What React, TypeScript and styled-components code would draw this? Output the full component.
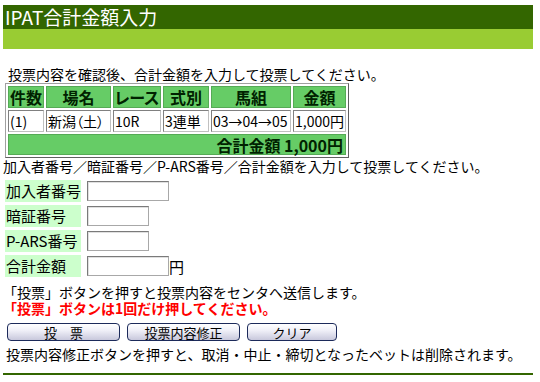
import styled, { createGlobalStyle } from "styled-components";

const GlobalStyle = createGlobalStyle`
  body {
    margin: 0;
    background: #ffffff;
    font-family: "Noto Sans CJK JP", "Liberation Sans", sans-serif;
    color: #000000;
  }
  * {
    box-sizing: border-box;
  }
`;

const Page = styled.div`
  width: 540px;
  height: 382px;
  padding: 5px 7px 0 3px;
  overflow: hidden;
`;

const TitleBar = styled.div`
  height: 24px;
  background: #336600;
  color: #ffffff;
  font-size: 19px;
  line-height: 24px;
  padding-left: 2px;
  white-space: nowrap;
`;

const SubBar = styled.div`
  height: 20px;
  background: #99cc33;
`;

const Line = styled.p<{ $indent?: number; $top?: number }>`
  margin: ${(p) => p.$top ?? 0}px 0 0 ${(p) => p.$indent ?? 0}px;
  font-size: 14px;
  line-height: 16px;
  white-space: nowrap;
`;

const Warning = styled.strong`
  color: #ff0000;
  font-weight: bold;
`;

const BetTable = styled.table`
  margin: 1px 0 0 2px;
  border: 1px solid #a0a0a0;
  border-right-color: #606060;
  border-bottom-color: #606060;
  border-spacing: 2px;
  table-layout: fixed;
  font-feature-settings: "palt";
`;

const HeadCell = styled.th<{ $w: number }>`
  width: ${(p) => p.$w}px;
  height: 22px;
  padding: 0;
  background: #66cc66;
  border: 1px solid #55aa55;
  color: #002200;
  font-size: 16px;
  font-weight: bold;
  text-align: center;
  line-height: 18px;
  white-space: nowrap;
`;

const DataCell = styled.td`
  height: 22px;
  padding: 0 1px;
  background: #ffffff;
  border: 1px solid #c0c0c0;
  border-top-color: #808080;
  border-left-color: #808080;
  font-size: 14px;
  line-height: 18px;
  white-space: nowrap;
`;

const TotalCell = styled.td`
  height: 21px;
  padding: 0 2px;
  background: #66cc66;
  border: 1px solid #55aa55;
  color: #002200;
  font-size: 16px;
  font-weight: bold;
  text-align: right;
  line-height: 18px;
`;

const FormGrid = styled.div`
  margin: 6px 0 0 2px;
  display: grid;
  grid-template-columns: 76px auto;
  column-gap: 6px;
  row-gap: 3px;
`;

const FieldLabel = styled.div`
  height: 22px;
  background: #ccffcc;
  font-size: 15px;
  line-height: 22px;
  padding-left: 1px;
  white-space: nowrap;
`;

const FieldBox = styled.div`
  display: flex;
  align-items: center;
  font-size: 15px;
`;

const TextInput = styled.input<{ $w: number }>`
  width: ${(p) => p.$w}px;
  height: 20px;
  margin: 0;
  padding: 0 2px;
  border: 1px solid #a8a8a8;
  border-top-color: #7a7a7a;
  border-left-color: #7a7a7a;
  box-shadow: inset 1px 1px 0 #e0e0e0;
  background: #ffffff;
`;

const ButtonRow = styled.div`
  display: flex;
  gap: 7px;
  margin: 7px 0 0 4px;
`;

const PushButton = styled.button<{ $w: number }>`
  width: ${(p) => p.$w}px;
  height: 18px;
  padding: 0;
  border: 1px solid #1c2a5a;
  border-radius: 4px;
  background: linear-gradient(#ffffff 0%, #f0f0f8 40%, #c8c8dc 100%);
  font-family: "Noto Sans CJK JP", sans-serif;
  font-size: 13px;
  line-height: 15px;
  color: #000000;
  white-space: nowrap;
`;

const FooterRule = styled.div`
  margin-top: 11px;
  height: 2px;
  background: #336600;
`;

const heads = [
  { label: "件数", w: 36 },
  { label: "場名", w: 65 },
  { label: "レース", w: 48 },
  { label: "式別", w: 46 },
  { label: "馬組", w: 80 },
  { label: "金額", w: 52 },
];

const row = ["(1)", "新潟（土）", "10R", "3連単", "03→04→05", "1,000円"];

const fields = [
  { label: "加入者番号", w: 82, unit: "" },
  { label: "暗証番号", w: 62, unit: "" },
  { label: "P-ARS番号", w: 62, unit: "" },
  { label: "合計金額", w: 82, unit: "円" },
];

export default function App() {
  return (
    <Page>
      <GlobalStyle />
      <TitleBar>IPAT合計金額入力</TitleBar>
      <SubBar />
      <Line $indent={5} $top={17}>
        投票内容を確認後、合計金額を入力して投票してください。
      </Line>
      <BetTable>
        <thead>
          <tr>
            {heads.map((h) => (
              <HeadCell key={h.label} $w={h.w}>
                {h.label}
              </HeadCell>
            ))}
          </tr>
        </thead>
        <tbody>
          <tr>
            {row.map((v, i) => (
              <DataCell key={i}>{v}</DataCell>
            ))}
          </tr>
          <tr>
            <TotalCell colSpan={6}>合計金額 1,000円</TotalCell>
          </tr>
        </tbody>
      </BetTable>
      <Line $top={0}>
        加入者番号／暗証番号／P-ARS番号／合計金額を入力して投票してください。
      </Line>
      <FormGrid>
        {fields.map((f) => [
          <FieldLabel key={f.label}>{f.label}</FieldLabel>,
          <FieldBox key={f.label + "-box"}>
            <TextInput type="text" $w={f.w} />
            {f.unit}
          </FieldBox>,
        ])}
      </FormGrid>
      <Line $top={7}>
        「投票」ボタンを押すと投票内容をセンタへ送信します。
        <br />
        <Warning>「投票」ボタンは1回だけ押してください。</Warning>
      </Line>
      <ButtonRow>
        <PushButton $w={113}>投　票</PushButton>
        <PushButton $w={113}>投票内容修正</PushButton>
        <PushButton $w={90}>クリア</PushButton>
      </ButtonRow>
      <Line $indent={3} $top={5}>
        投票内容修正ボタンを押すと、取消・中止・締切となったベットは削除されます。
      </Line>
      <FooterRule />
    </Page>
  );
}
